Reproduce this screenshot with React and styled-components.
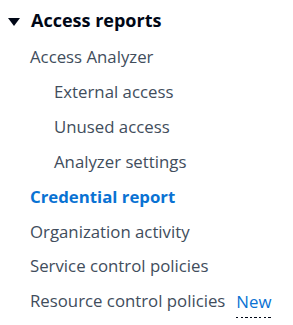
import React from "react";
import styled, { createGlobalStyle } from "styled-components";

const Global = createGlobalStyle`
  html, body { margin: 0; padding: 0; background: #ffffff; }
  body { font-family: "Open Sans", "Noto Sans", sans-serif; -webkit-font-smoothing: antialiased; }
`;

const Nav = styled.nav`
  width: 293px;
  display: flex;
  flex-direction: column;
`;

const Header = styled.div`
  display: flex;
  align-items: center;
  gap: 11px;
  box-sizing: border-box;
  height: 39.4px;
  padding: 1px 0 0 8px;
  font-size: 18px;
  font-weight: 700;
  color: #000716;
  white-space: nowrap;
`;

const Caret = styled.svg`
  width: 12px;
  height: 8px;
  flex: none;
  margin-top: 4px;
`;

const List = styled.ul`
  list-style: none;
  margin: 0;
  padding: 0;
  display: flex;
  flex-direction: column;
`;

const Item = styled.li`
  display: flex;
  align-items: center;
  gap: 11px;
  height: 34.86px;
  padding-left: ${(p) => (p.$level === 2 ? 54 : 30)}px;
  font-size: 16.8px;
  color: ${(p) => (p.$active ? "#0972d3" : "#414d5c")};
  font-weight: ${(p) => (p.$active ? 700 : 400)};
  white-space: nowrap;
`;

const Badge = styled.span`
  color: #0972d3;
  font-weight: 400;
  line-height: normal;
  padding-bottom: 5px;
  margin-top: 6px;
  background-image: repeating-linear-gradient(
    to right,
    #000716 0,
    #000716 2.5px,
    transparent 2.5px,
    transparent 4.6px
  );
  background-size: 100% 1px;
  background-position: 0 100%;
  background-repeat: no-repeat;
`;

const items = [
  { label: "Access Analyzer", level: 1 },
  { label: "External access", level: 2 },
  { label: "Unused access", level: 2 },
  { label: "Analyzer settings", level: 2 },
  { label: "Credential report", level: 1, active: true },
  { label: "Organization activity", level: 1 },
  { label: "Service control policies", level: 1 },
  { label: "Resource control policies", level: 1, badge: "New" },
];

export default function App() {
  return (
    <>
      <Global />
      <Nav>
        <Header>
          <Caret viewBox="0 0 12 8">
            <polygon points="0,0 12,0 6,8" fill="#000716" />
          </Caret>
          Access reports
        </Header>
        <List>
          {items.map((it) => (
            <Item key={it.label} $level={it.level} $active={it.active}>
              {it.label}
              {it.badge && <Badge>{it.badge}</Badge>}
            </Item>
          ))}
        </List>
      </Nav>
    </>
  );
}
